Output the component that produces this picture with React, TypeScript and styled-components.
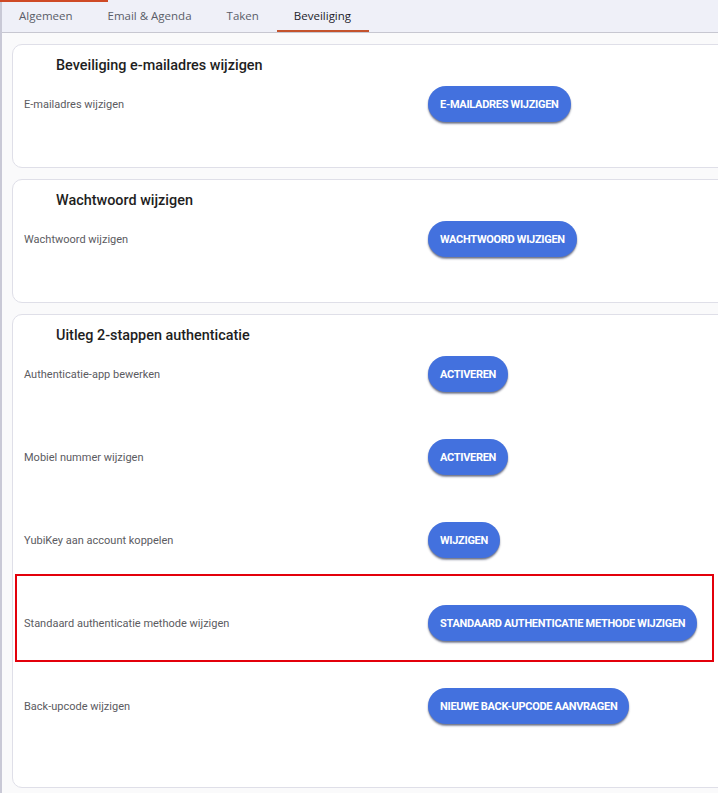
import React, { FC } from 'react';
import styled, { createGlobalStyle } from 'styled-components';

const GlobalStyle = createGlobalStyle`
    html, body {
        margin: 0;
        padding: 0;
        background: #fafafb;
        overflow: hidden;
    }
    *, *::before, *::after {
        box-sizing: border-box;
    }
`;

interface Row {
    label: string
    action: string
    highlight?: boolean
}

interface Section {
    title: string
    rows: Row[]
    bottom?: number
}

const TABS = ['Algemeen', 'Email & Agenda', 'Taken', 'Beveiliging'];
const ACTIVE_TAB = 'Beveiliging';

const SECTIONS: Section[] = [
    {
        title: 'Beveiliging e-mailadres wijzigen',
        rows: [{ label: 'E-mailadres wijzigen', action: 'E-mailadres wijzigen' }],
    },
    {
        title: 'Wachtwoord wijzigen',
        rows: [{ label: 'Wachtwoord wijzigen', action: 'Wachtwoord wijzigen' }],
    },
    {
        title: 'Uitleg 2-stappen authenticatie',
        bottom: 61,
        rows: [
            { label: 'Authenticatie-app bewerken', action: 'Activeren' },
            { label: 'Mobiel nummer wijzigen', action: 'Activeren' },
            { label: 'YubiKey aan account koppelen', action: 'Wijzigen' },
            {
                label: 'Standaard authenticatie methode wijzigen',
                action: 'Standaard authenticatie methode wijzigen',
                highlight: true,
            },
            { label: 'Back-upcode wijzigen', action: 'Nieuwe back-upcode aanvragen' },
        ],
    },
];

const App: FC = () => {
    return (
        <Page>
            <GlobalStyle />
            <TabBar>
                <Progress />
                {TABS.map((tab) => (
                    <Tab key={tab} active={tab === ACTIVE_TAB}>
                        {tab}
                    </Tab>
                ))}
            </TabBar>
            <Content>
                {SECTIONS.map((section) => (
                    <Card key={section.title} bottom={section.bottom ?? 43}>
                        <CardTitle>{section.title}</CardTitle>
                        <Rows>
                            {section.rows.map((row) => (
                                <SettingRow key={row.label} highlight={row.highlight}>
                                    <Label>{row.label}</Label>
                                    <ActionButton type="button">{row.action}</ActionButton>
                                </SettingRow>
                            ))}
                        </Rows>
                    </Card>
                ))}
            </Content>
        </Page>
    )
}

const Page = styled.div`
    min-height: 100vh;
    border-left: 2px solid #c9c9d6;
    background: #fafafb;
`;

const TabBar = styled.div`
    position: relative;
    display: flex;
    height: 33px;
    background: #eff0f8;
    border-bottom: 1px solid #c7c7d1;
`;

const Progress = styled.div`
    position: absolute;
    top: 0;
    left: -2px;
    width: 108px;
    height: 2px;
    background: #cf4a26;
`;

const Tab = styled.div<{ active?: boolean }>`
    display: flex;
    align-items: center;
    height: 32px;
    padding: 0 18px 0 17px;
    font-family: "Open Sans", "Noto Sans", sans-serif;
    font-size: 11.5px;
    font-weight: 500;
    color: ${(p) => (p.active ? '#1d1d2b' : '#5a5d68')};
    border-bottom: 2px solid ${(p) => (p.active ? '#c4532d' : 'transparent')};
`;

const Content = styled.div`
    display: flex;
    flex-direction: column;
    gap: 11px;
    padding: 11px 0 0 10px;
`;

const Card = styled.section<{ bottom: number }>`
    width: 730px;
    background: #ffffff;
    border: 1px solid #dfdfe8;
    border-radius: 10px;
    padding: 11px 0 ${(p) => p.bottom}px 0;
`;

const CardTitle = styled.h2`
    margin: 0;
    padding-left: 43px;
    font-family: Roboto, "Liberation Sans", sans-serif;
    font-size: 14.4px;
    font-weight: 500;
    line-height: 20px;
    color: #1e1e22;
`;

const Rows = styled.div`
    display: flex;
    flex-direction: column;
    gap: 43px;
    margin-top: 8px;
    padding-left: 11px;
`;

const SettingRow = styled.div<{ highlight?: boolean }>`
    position: relative;
    display: grid;
    grid-template-columns: 404px auto;
    align-items: center;
    justify-items: start;
    height: 40px;

    &::after {
        content: '';
        display: ${(p) => (p.highlight ? 'block' : 'none')};
        position: absolute;
        top: -29px;
        bottom: -19px;
        left: -9px;
        width: 699px;
        border: 2px solid #e3000b;
        pointer-events: none;
    }
`;

const Label = styled.span`
    font-family: Roboto, "Liberation Sans", sans-serif;
    font-size: 11px;
    color: #5b5b5f;
`;

const ActionButton = styled.button`
    height: 36px;
    padding: 0 12px;
    border: none;
    border-radius: 18px;
    background: #4371de;
    color: #ffffff;
    font-family: Roboto, "Liberation Sans", sans-serif;
    font-size: 11px;
    font-weight: 700;
    letter-spacing: -0.3px;
    text-transform: uppercase;
    white-space: nowrap;
    box-shadow: 0 2px 2px rgba(10, 20, 60, 0.45), 0 1px 1px rgba(0, 0, 0, 0.2);
    cursor: pointer;
`;

export default App;
